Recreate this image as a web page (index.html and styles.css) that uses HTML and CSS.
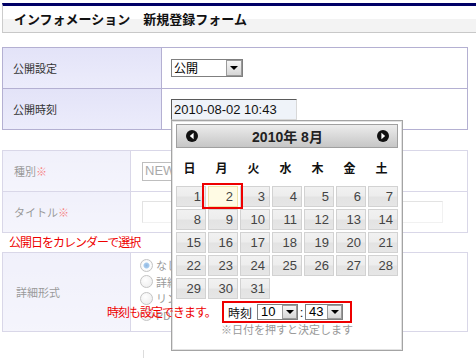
FILE: index.html
```html
<!DOCTYPE html>
<html lang="ja">
<head>
<meta charset="utf-8">
<title>インフォメーション 新規登録フォーム</title>
<link rel="stylesheet" href="styles.css">
</head>
<body>
<div class="page">
  <div class="head"><h1 class="title">インフォメーション　新規登録フォーム</h1></div>

  <div class="form form-main">
    <div class="lbl">公開設定</div>
    <div class="val">
      <span class="sel sel-pub"><span class="sel-text">公開</span><span class="sel-btn"></span></span>
    </div>
    <div class="lbl">公開時刻</div>
    <div class="val"><span class="inp">2010-08-02 10:43</span></div>
  </div>

  <div class="faded">
    <div class="form form-sub">
      <div class="lbl">種別<span class="req">※</span></div>
      <div class="val val-sub">
        <span class="sel sel-kind"><span class="sel-text">NEWS</span><span class="sel-btn"></span></span>
      </div>
      <div class="lbl">タイトル<span class="req">※</span></div>
      <div class="val val-sub"><span class="inp inp-title"></span></div>
    </div>
    <div class="form form-sub form-detail">
      <div class="lbl lbl-detail">詳細形式</div>
      <div class="val val-sub val-radios">
        <label class="opt"><span class="radio checked"></span>なし</label>
        <label class="opt"><span class="radio"></span>詳細ページ</label>
        <label class="opt"><span class="radio"></span>リンク</label>
        <label class="opt"><span class="radio"></span>PDF</label>
      </div>
    </div>
    <div class="tail"></div>
  </div>

  <div class="cal">
    <div class="cal-head">
      <svg class="pager" width="12" height="12" viewBox="0 0 12 12"><circle cx="6" cy="6" r="6" fill="#111"/><path d="M7.6 2.8 L3.8 6 L7.6 9.2 Z" fill="#fff"/></svg>
      <span class="cal-title">2010年 8月</span>
      <svg class="pager" width="12" height="12" viewBox="0 0 12 12"><circle cx="6" cy="6" r="6" fill="#111"/><path d="M4.4 2.8 L8.2 6 L4.4 9.2 Z" fill="#fff"/></svg>
    </div>
    <div class="cal-week">
      <span>日</span><span>月</span><span>火</span><span>水</span><span>木</span><span>金</span><span>土</span>
    </div>
    <div class="cal-days">
      <span class="day">1</span><span class="day today">2</span><span class="day">3</span><span class="day">4</span><span class="day">5</span><span class="day">6</span><span class="day">7</span>
      <span class="day">8</span><span class="day">9</span><span class="day">10</span><span class="day">11</span><span class="day">12</span><span class="day">13</span><span class="day">14</span>
      <span class="day">15</span><span class="day">16</span><span class="day">17</span><span class="day">18</span><span class="day">19</span><span class="day">20</span><span class="day">21</span>
      <span class="day">22</span><span class="day">23</span><span class="day">24</span><span class="day">25</span><span class="day">26</span><span class="day">27</span><span class="day">28</span>
      <span class="day">29</span><span class="day">30</span><span class="day">31</span>
    </div>
    <div class="cal-time">
      <span class="time-lbl">時刻</span>
      <span class="sel sel-time sel-h"><span class="sel-text">10</span><span class="sel-btn"></span></span>
      <span class="colon">:</span>
      <span class="sel sel-time sel-m"><span class="sel-text">43</span><span class="sel-btn"></span></span>
    </div>
    <div class="cal-hint">※日付を押すと決定します</div>
  </div>

  <div class="mark mark-day"></div>
  <div class="note note-cal">公開日をカレンダーで選択</div>
  <div class="note note-time">時刻も設定できます。</div>
</div>
</body>
</html>
```
FILE: styles.css
```css
* { box-sizing: border-box; }

body {
  margin: 0;
  background: #fff;
  color: #333;
  font-family: "Liberation Sans", "Noto Sans CJK JP", sans-serif;
  font-size: 12px;
}

.page {
  position: relative;
  width: 476px;
  height: 358px;
  overflow: hidden;
}

/* header */
.head {
  margin: 3px 0 0 2px;
  height: 30px;
  border-top: 3px solid #000066;
  border-left: 1px solid #cccccc;
  border-bottom: 1px solid #c8c8c8;
  background: linear-gradient(#ffffff 0, #ffffff 13px, #f3f3f3 13px);
}
.title {
  margin: 0;
  padding: 3px 0 0 11px;
  font-family: "Noto Sans CJK JP", sans-serif;
  font-size: 13px;
  font-weight: bold;
  line-height: 20px;
  color: #111;
}

/* form tables */
.form {
  display: grid;
  margin: 14px 0 0 2px;
  width: 466px;
  border: 1px solid #b4b0d2;
  border-bottom: 0;
}
.form-main { grid-template-columns: 159px 1fr; grid-auto-rows: 41px; }
.form-sub { grid-template-columns: 128px 1fr; grid-auto-rows: 41px; margin-top: 20px; }
.form-detail { grid-auto-rows: 79px; margin-top: 19px; }

.lbl {
  display: flex;
  align-items: center;
  padding-left: 10px;
  border-right: 1px solid #b4b0d2;
  border-bottom: 1px solid #b4b0d2;
  background: linear-gradient(#e3e3f8, #ececfb);
  font-family: "Noto Sans CJK JP", sans-serif;
  font-size: 11px;
  color: #333;
}
.form-sub .lbl { padding-left: 11px; }
.lbl-detail { padding-left: 13px !important; }
.req { color: #e00; }

.val {
  display: flex;
  align-items: center;
  padding-left: 9px;
  border-bottom: 1px solid #b4b0d2;
  background: #fff;
}
.val-sub { padding-left: 11px; }

/* select look-alike */
.sel {
  display: inline-flex;
  align-items: center;
  height: 18px;
  border: 1px solid #7f7f7f;
  background: #fff;
}
.sel-text {
  flex: 1;
  padding-left: 2px;
  font-family: "Noto Sans CJK JP", sans-serif;
  font-size: 12px;
  line-height: 16px;
  color: #000;
}
.sel-btn {
  position: relative;
  width: 16px;
  height: 16px;
  border: 1px solid #9a9a9a;
  background: linear-gradient(#f6f6f6, #d6d6d6);
}
.sel-btn::after {
  content: "";
  position: absolute;
  left: 3px;
  top: 5px;
  border-left: 4px solid transparent;
  border-right: 4px solid transparent;
  border-top: 4px solid #000;
}
.sel-pub { width: 72px; }
.sel-kind { width: 90px; height: 19px; }
.sel-kind .sel-text { font-family: "Liberation Sans", sans-serif; font-size: 13px; color: #555; }

/* text input look-alike */
.inp {
  display: inline-block;
  width: 126px;
  height: 21px;
  padding-left: 2px;
  border: 1px solid;
  border-color: #5a5a5a #d8d8d8 #d8d8d8 #5a5a5a;
  background: #eff3f9;
  font-size: 13px;
  line-height: 19px;
  color: #111;
}
.inp-title {
  width: 301px;
  height: 22px;
  border-color: #c8c8c8 #e4e4e4 #e4e4e4 #c8c8c8;
  background: #fff;
}

/* faded part of the form */
.faded { opacity: 0.5; }
.val-radios {
  flex-direction: column;
  align-items: flex-start;
  justify-content: flex-start;
  padding-top: 4px;
  padding-left: 9px;
}
.opt {
  display: flex;
  align-items: center;
  gap: 3px;
  height: 16.5px;
  font-family: "Noto Sans CJK JP", sans-serif;
  font-size: 11px;
  color: #333;
}
.radio {
  width: 13px;
  height: 13px;
  border-radius: 50%;
  border: 1px solid #8a8a8a;
  background: radial-gradient(circle at 40% 35%, #ffffff, #d8d8d8);
}
.radio.checked {
  background: radial-gradient(circle, #2a6fbf 0, #4f9ae0 2.5px, #ffffff 3.5px, #dcdcdc);
}
.tail {
  margin: 18px 0 0 143px;
  height: 10px;
  border-left: 1px solid #bbb;
}

/* calendar popup */
.cal {
  position: absolute;
  left: 171px;
  top: 120px;
  width: 232px;
  height: 231px;
  padding: 3px 4px 0;
  border: 1px solid #a4a4a4;
  box-shadow: inset 0 0 0 1px #e2e2e2;
  background: #fff;
}
.cal-head {
  display: flex;
  align-items: center;
  justify-content: space-between;
  height: 24px;
  padding: 0 8px 0 9px;
  border: 1px solid #a0a0a0;
  background: linear-gradient(#ececec, #c6c6c6);
}
.pager { display: block; }
.cal-title {
  font-size: 14px;
  font-weight: bold;
  color: #222;
  font-family: "Liberation Sans", "Noto Sans CJK JP", sans-serif;
}
.cal-week {
  display: grid;
  grid-template-columns: repeat(7, 30px);
  column-gap: 2px;
  height: 38px;
  align-items: center;
  justify-items: center;
  font-family: "Noto Sans CJK JP", sans-serif;
  font-size: 12px;
  font-weight: bold;
  color: #111;
}
.cal-week span { margin-left: -3px; }
.cal-days {
  display: grid;
  grid-template-columns: repeat(7, 30px);
  grid-auto-rows: 21px;
  gap: 2px;
}
.day {
  padding-right: 4px;
  border: 1px solid #d2d2d2;
  background: linear-gradient(#f1f1f1 0, #ededed 48%, #e3e3e3 52%, #e6e6e6 100%);
  text-align: right;
  font-size: 13px;
  line-height: 19px;
  color: #444;
}
.day.today {
  border-color: #f0e3a8;
  background: #fffbe4;
}
.cal-time {
  display: flex;
  align-items: center;
  width: 130px;
  height: 22px;
  margin: 2px auto 0;
  padding-left: 4px;
  border: 2px solid #e00;
}
.time-lbl {
  font-family: "Noto Sans CJK JP", sans-serif;
  font-size: 12px;
  color: #111;
  margin-right: 5px;
}
.sel-time { height: 16px; }
.sel-time .sel-text { font-family: "Liberation Sans", sans-serif; font-size: 13px; line-height: 14px; padding-left: 3px; }
.sel-time .sel-btn { width: 15px; height: 14px; }
.sel-time .sel-btn::after { top: 4px; left: 3px; }
.sel-h { width: 41px; }
.sel-m { width: 38px; }
.colon { width: 7px; text-align: center; font-size: 13px; color: #111; }
.cal-hint {
  text-align: center;
  font-family: "Noto Sans CJK JP", sans-serif;
  font-size: 11px;
  line-height: 13px;
  color: #999;
}

/* red annotations */
.mark {
  position: absolute;
  border: 2px solid #e00;
}
.mark-day { left: 202px; top: 183px; width: 41px; height: 26px; }
.note {
  position: absolute;
  white-space: nowrap;
  font-family: "Noto Sans CJK JP", sans-serif;
  font-size: 12px;
  letter-spacing: -1px;
  line-height: 14px;
  color: #e00;
}
.note-cal { left: 9px; top: 235px; }
.note-time { left: 107px; top: 305px; }
```
